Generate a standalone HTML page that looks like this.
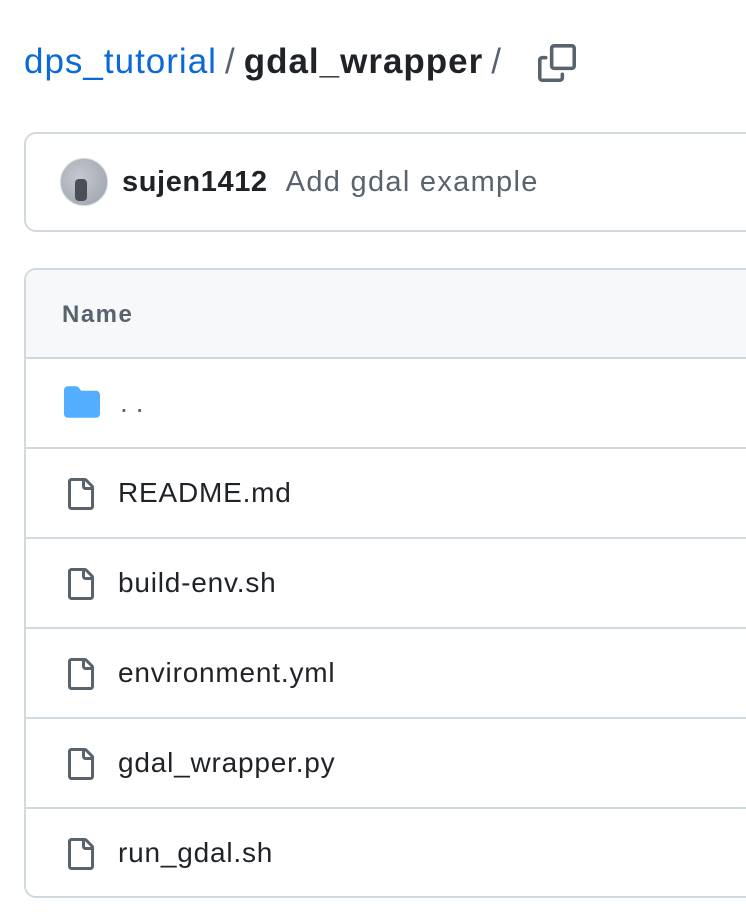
<!DOCTYPE html>
<html><head><style>
body{margin:0;width:746px;height:914px;background:#fff;font-family:"Liberation Sans",sans-serif;overflow:hidden;position:relative;color:#1f2328}
.bc{position:absolute;left:24px;top:42px;font-size:35px;white-space:nowrap;letter-spacing:1px}
.bc a{color:#0969da;text-decoration:none;font-weight:500}
.sl{color:#59636e;margin:0 8px;font-weight:400}
.box{position:absolute;left:24px;width:760px;border:2px solid #d1d9e0;border-radius:12px;box-sizing:border-box}
.commit{top:132px;height:100px}
.tbl{top:268px;height:630px;overflow:hidden}
.hdr{height:89px;background:#f6f8fa;border-bottom:2px solid #d1d9e0;box-sizing:border-box;font-weight:bold;color:#59636e;font-size:24px;line-height:89px;padding-left:36px;letter-spacing:1.5px}
.row{height:90px;border-bottom:2px solid #d1d9e0;box-sizing:border-box;position:relative;font-size:28px;line-height:88px;padding-left:92px;letter-spacing:0.8px}
.row:last-child{border-bottom:none}
.row svg{position:absolute;left:38px;top:27px}
</style></head><body>
<div class="bc"><a>dps_tutorial</a><span class="sl">/</span><b style="font-weight:600">gdal_wrapper</b><span class="sl">/</span></div>
<svg style="position:absolute;left:538px;top:44px" width="38" height="38" viewBox="0 0 16 16" fill="#59636e"><path d="M0 6.75C0 5.784.784 5 1.75 5h1.5a.75.75 0 0 1 0 1.5h-1.5a.25.25 0 0 0-.25.25v7.5c0 .138.112.25.25.25h7.5a.25.25 0 0 0 .25-.25v-1.5a.75.75 0 0 1 1.5 0v1.5A1.75 1.75 0 0 1 9.250 16h-7.5A1.75 1.75 0 0 1 0 14.25Z"/><path d="M5 1.75C5 .784 5.784 0 6.75 0h7.5C15.216 0 16 .784 16 1.75v7.5A1.75 1.75 0 0 1 14.25 11h-7.5A1.75 1.75 0 0 1 5 9.25Zm1.75-.25a.25.25 0 0 0-.25.25v7.5c0 .138.112.25.25.25h7.5a.25.25 0 0 0 .25-.25v-7.5a.25.25 0 0 0-.25-.25Z"/></svg>
<div class="box commit">
<div style="position:absolute;left:34px;top:24px;width:46px;height:46px;border-radius:50%;background:radial-gradient(circle at 40% 40%,#c4c8d0,#9aa0aa);border:1px solid #d1d9e0"><div style="position:absolute;left:14px;top:20px;width:12px;height:22px;background:#4a4f55;border-radius:4px"></div></div>
<div style="position:absolute;left:96px;top:0;line-height:96px;font-size:29px;white-space:nowrap"><b style="letter-spacing:0.6px">sujen1412</b><span style="color:#59636e;margin-left:18px;letter-spacing:1.3px">Add gdal example</span></div>
</div>
<div class="box tbl">
<div class="hdr">Name</div>
<div class="row" style="padding-left:94px"><svg width="36" height="32" viewBox="0 0 16 14"><path fill="#54aeff" d="M0 1.75C0 .784.784 0 1.75 0h3.5c.55 0 1.07.26 1.4.7l.9 1.2c.05.06.12.1.2.1h6.5c.966 0 1.75.784 1.75 1.75v8.5A1.75 1.75 0 0 1 14.25 14H1.75A1.75 1.75 0 0 1 0 12.25Z"/></svg><span style="color:#59636e;letter-spacing:8px">..</span></div>
<div class="row"><svg width="32" height="36" viewBox="0 0 16 16" style="left:38px"><path fill="#59636e" d="M2 1.75C2 .784 2.784 0 3.75 0h6.586c.464 0 .909.184 1.237.513l2.914 2.914c.329.328.513.773.513 1.237v9.586A1.75 1.75 0 0 1 13.25 16h-9.5A1.75 1.75 0 0 1 2 14.25Zm1.75-.25a.25.25 0 0 0-.25.25v12.5c0 .138.112.25.25.25h9.5a.25.25 0 0 0 .25-.25V6h-2.75A1.75 1.75 0 0 1 9 4.25V1.5Zm6.75.062V4.25c0 .138.112.25.25.25h2.688l-.011-.013-2.914-2.914-.013-.011Z"/></svg>README.md</div>
<div class="row"><svg width="32" height="36" viewBox="0 0 16 16" style="left:38px"><path fill="#59636e" d="M2 1.75C2 .784 2.784 0 3.75 0h6.586c.464 0 .909.184 1.237.513l2.914 2.914c.329.328.513.773.513 1.237v9.586A1.75 1.75 0 0 1 13.25 16h-9.5A1.75 1.75 0 0 1 2 14.25Zm1.75-.25a.25.25 0 0 0-.25.25v12.5c0 .138.112.25.25.25h9.5a.25.25 0 0 0 .25-.25V6h-2.75A1.75 1.75 0 0 1 9 4.25V1.5Zm6.75.062V4.25c0 .138.112.25.25.25h2.688l-.011-.013-2.914-2.914-.013-.011Z"/></svg>build-env.sh</div>
<div class="row"><svg width="32" height="36" viewBox="0 0 16 16" style="left:38px"><path fill="#59636e" d="M2 1.75C2 .784 2.784 0 3.75 0h6.586c.464 0 .909.184 1.237.513l2.914 2.914c.329.328.513.773.513 1.237v9.586A1.75 1.75 0 0 1 13.25 16h-9.5A1.75 1.75 0 0 1 2 14.25Zm1.75-.25a.25.25 0 0 0-.25.25v12.5c0 .138.112.25.25.25h9.5a.25.25 0 0 0 .25-.25V6h-2.75A1.75 1.75 0 0 1 9 4.25V1.5Zm6.75.062V4.25c0 .138.112.25.25.25h2.688l-.011-.013-2.914-2.914-.013-.011Z"/></svg>environment.yml</div>
<div class="row"><svg width="32" height="36" viewBox="0 0 16 16" style="left:38px"><path fill="#59636e" d="M2 1.75C2 .784 2.784 0 3.75 0h6.586c.464 0 .909.184 1.237.513l2.914 2.914c.329.328.513.773.513 1.237v9.586A1.75 1.75 0 0 1 13.25 16h-9.5A1.75 1.75 0 0 1 2 14.25Zm1.75-.25a.25.25 0 0 0-.25.25v12.5c0 .138.112.25.25.25h9.5a.25.25 0 0 0 .25-.25V6h-2.75A1.75 1.75 0 0 1 9 4.25V1.5Zm6.75.062V4.25c0 .138.112.25.25.25h2.688l-.011-.013-2.914-2.914-.013-.011Z"/></svg>gdal_wrapper.py</div>
<div class="row"><svg width="32" height="36" viewBox="0 0 16 16" style="left:38px"><path fill="#59636e" d="M2 1.75C2 .784 2.784 0 3.75 0h6.586c.464 0 .909.184 1.237.513l2.914 2.914c.329.328.513.773.513 1.237v9.586A1.75 1.75 0 0 1 13.25 16h-9.5A1.75 1.75 0 0 1 2 14.25Zm1.75-.25a.25.25 0 0 0-.25.25v12.5c0 .138.112.25.25.25h9.5a.25.25 0 0 0 .25-.25V6h-2.75A1.75 1.75 0 0 1 9 4.25V1.5Zm6.75.062V4.25c0 .138.112.25.25.25h2.688l-.011-.013-2.914-2.914-.013-.011Z"/></svg>run_gdal.sh</div>
</div>
</body></html>
